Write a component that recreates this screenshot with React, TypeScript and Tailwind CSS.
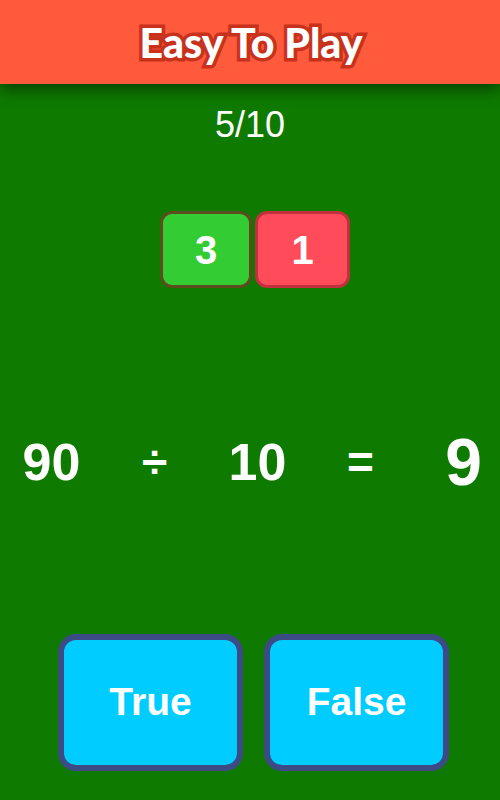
export default function App() {
  const eq = [
    { t: "90", cls: "text-[52px] font-bold" },
    { t: "÷", cls: "text-[46px] font-bold" },
    { t: "10", cls: "text-[52px] font-bold" },
    { t: "=", cls: "text-[46px] font-bold" },
    { t: "9", cls: "text-[66px] font-bold" },
  ];

  return (
    <div
      className="w-[500px] h-[800px] bg-[#0e7a00] flex flex-col overflow-hidden text-white"
      style={{ fontFamily: '"Liberation Sans", Arial, sans-serif' }}
    >
      <header className="h-[84px] shrink-0 bg-[#ff5a3b] flex items-center justify-center shadow-[0_6px_14px_rgba(0,0,0,0.45)] relative z-10">
        <h1
          className="text-[41px] font-black tracking-[0px] text-white pt-[2px] ml-[2px]"
          style={{
            fontFamily: 'Lato, "DejaVu Sans", sans-serif',
            WebkitTextStroke: "7px #c8321c",
            paintOrder: "stroke fill",
          }}
        >
          Easy To Play
        </h1>
      </header>

      <div className="text-center text-[36px] mt-[23px] leading-none">5/10</div>

      <div className="flex justify-center gap-[3px] mt-[68px] pl-[10px]">
        <div className="w-[92px] h-[77px] rounded-[12px] bg-[#33cc33] border-[3px] border-[#5b4d1e] flex items-center justify-center text-[40px] font-bold">
          3
        </div>
        <div className="w-[95px] h-[77px] rounded-[12px] bg-[#ff4b5a] border-[3px] border-[#c0303d] flex items-center justify-center text-[40px] font-bold">
          1
        </div>
      </div>

      <div className="flex mt-[139px] h-[70px] items-center">
        {eq.map((e, i) => (
          <div key={i} className={`w-[103px] shrink-0 text-center leading-none ${e.cls}`}>
            {e.t}
          </div>
        ))}
      </div>

      <div className="flex justify-center gap-[21px] mt-[137px] pl-[7px]">
        <button className="w-[185px] h-[137px] rounded-[18px] bg-[#00ccff] border-[6px] border-[#3c4a86] text-[39px] font-bold text-white">
          True
        </button>
        <button className="w-[185px] h-[137px] rounded-[18px] bg-[#00ccff] border-[6px] border-[#3c4a86] text-[39px] font-bold text-white">
          False
        </button>
      </div>
    </div>
  );
}
